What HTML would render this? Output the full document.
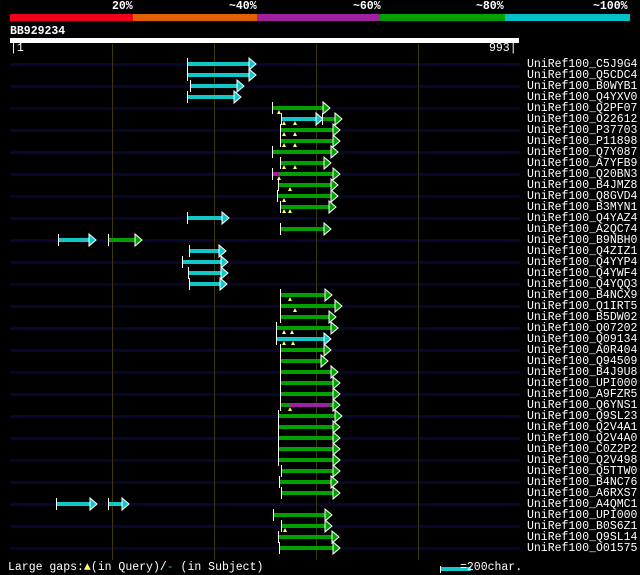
<!DOCTYPE html>
<html><head><meta charset="utf-8"><style>
html,body{margin:0;padding:0;background:#000;width:640px;height:575px;overflow:hidden;position:relative}
.t{position:absolute;color:#fff;font-family:"Liberation Mono","DejaVu Sans Mono",monospace;font-size:11.5px;line-height:11px;white-space:pre}
#labels div{position:absolute;left:527px;color:#fff;font-family:"Liberation Mono",monospace;font-size:11.5px;line-height:11px;white-space:pre}
svg{position:absolute;left:0;top:0}
</style></head><body>
<svg id="s" width="640" height="575"></svg>
<div class="t" style="left:112px;top:1px;font-weight:bold">20%</div>
<div class="t" style="left:229px;top:1px;font-weight:bold">~40%</div>
<div class="t" style="left:353px;top:1px;font-weight:bold">~60%</div>
<div class="t" style="left:476px;top:1px;font-weight:bold">~80%</div>
<div class="t" style="left:593px;top:1px;font-weight:bold">~100%</div>
<div class="t" style="left:10px;top:26px;font-weight:bold">BB929234</div>
<div class="t" style="left:10px;top:43px">|1</div>
<div class="t" style="left:489px;top:43px">993|</div>
<div class="t" style="left:8px;top:562px">Large gaps:<span style="color:#ff6">&#9650;</span>(in Query)/<span style="color:#0cc">-</span> (in Subject)</div>
<div class="t" style="left:460px;top:562px">=200char.</div>
<div id="labels">
<div style="top:59px">UniRef100_C5J9G4</div><div style="top:70px">UniRef100_Q5CDC4</div><div style="top:81px">UniRef100_B0WYB1</div><div style="top:92px">UniRef100_Q4YXV0</div><div style="top:103px">UniRef100_Q2PF07</div><div style="top:114px">UniRef100_O22612</div><div style="top:125px">UniRef100_P37703</div><div style="top:136px">UniRef100_P11898</div><div style="top:147px">UniRef100_Q7Y087</div><div style="top:158px">UniRef100_A7YFB9</div><div style="top:169px">UniRef100_Q20BN3</div><div style="top:180px">UniRef100_B4JMZ8</div><div style="top:191px">UniRef100_Q8GVD4</div><div style="top:202px">UniRef100_B3MYN1</div><div style="top:213px">UniRef100_Q4YAZ4</div><div style="top:224px">UniRef100_A2QC74</div><div style="top:235px">UniRef100_B9NBH0</div><div style="top:246px">UniRef100_Q4ZIZ1</div><div style="top:257px">UniRef100_Q4YYP4</div><div style="top:268px">UniRef100_Q4YWF4</div><div style="top:279px">UniRef100_Q4YQQ3</div><div style="top:290px">UniRef100_B4NCX9</div><div style="top:301px">UniRef100_Q1IRT5</div><div style="top:312px">UniRef100_B5DW02</div><div style="top:323px">UniRef100_Q07202</div><div style="top:334px">UniRef100_Q09134</div><div style="top:345px">UniRef100_A0R404</div><div style="top:356px">UniRef100_Q94509</div><div style="top:367px">UniRef100_B4J9U8</div><div style="top:378px">UniRef100_UPI000..</div><div style="top:389px">UniRef100_A9FZR5</div><div style="top:400px">UniRef100_Q6YNS1</div><div style="top:411px">UniRef100_Q9SL23</div><div style="top:422px">UniRef100_Q2V4A1</div><div style="top:433px">UniRef100_Q2V4A0</div><div style="top:444px">UniRef100_C0Z2P2</div><div style="top:455px">UniRef100_Q2V498</div><div style="top:466px">UniRef100_Q5TTW0</div><div style="top:477px">UniRef100_B4NC76</div><div style="top:488px">UniRef100_A6RXS7</div><div style="top:499px">UniRef100_A4QMC1</div><div style="top:510px">UniRef100_UPI000..</div><div style="top:521px">UniRef100_B0S6Z1</div><div style="top:532px">UniRef100_Q9SL14</div><div style="top:543px">UniRef100_O01575</div>
</div>
<script>
var s=document.getElementById('s'),h='';
function r(x,y,w,ht,c){h+='<rect x="'+x+'" y="'+y+'" width="'+w+'" height="'+ht+'" fill="'+c+'"/>';}
r(10,14,123,7,'#f00018');r(133,14,124,7,'#e06000');r(257,14,123,7,'#a020a0');r(380,14,125,7,'#00a000');r(505,14,125,7,'#00c0c8');
r(10,38,509,5,'#fff');
for(var i=0;i<45;i+=2)r(10,63+11*i,510,3,'#06062e');
[112,214,316,418].forEach(function(x){r(x,44,1,516,'#3a3a00');});
var C='#10c8c8',G='#00a000',M='#a020a0';
var rows=[[[187,255,C]],[[187,255,C]],[[190,243,C]],[[187,240,C]],[[272,329,G]],[[281,322,C],[322,341,G]],[[280,339,G]],[[280,339,G]],[[272,337,G]],[[280,330,G]],[[272,339,G,1]],[[278,337,G]],[[277,337,G]],[[280,335,G]],[[187,228,C]],[[280,330,G]],[[58,95,C],[108,141,G]],[[189,225,C]],[[182,227,C]],[[188,227,C]],[[189,226,C]],[[280,331,G]],[[280,341,G]],[[280,335,G]],[[276,337,G]],[[276,330,C]],[[280,330,G]],[[280,327,G]],[[280,337,G]],[[280,339,G]],[[280,339,G]],[[280,339,G,2]],[[278,341,G]],[[278,339,G]],[[278,339,G]],[[278,339,G]],[[278,339,G]],[[281,339,G]],[[279,337,G]],[[281,339,G]],[[56,96,C],[108,128,C]],[[273,331,G]],[[281,331,G]],[[278,338,G]],[[279,339,G]]];
var gaps={4:[279],5:[284,295],6:[284,295],7:[284,295],9:[284,295],10:[279],11:[290],12:[284],13:[284,290],21:[290],22:[295],24:[284,292],25:[284,293],31:[290],42:[285]};
rows.forEach(function(a,i){var y=64+11*i;a.forEach(function(b){
 var x1=b[0],x2=b[1]-6;
 if(b[3]==1){r(x1,y-2,7,4,M);x1+=7;}
 r(x1,y-2,x2-x1,4,b[2]);
 if(b[3]==2)r(290,y-2,40,4,M);
 r(b[0],y-6,1,12,'#fff');
 h+='<polygon points="'+x2+','+(y-6)+' '+(x2+7)+','+y+' '+x2+','+(y+6)+'" fill="'+b[2]+'" stroke="#fff" stroke-width="1"/>';
});
(gaps[i]||[]).forEach(function(g){h+='<polygon points="'+g+','+(y+2)+' '+(g+2)+','+(y+6)+' '+(g-2)+','+(y+6)+'" fill="#ff6"/>';});
});
r(440,566,1,7,'#fff');r(441,567,30,4,C);
s.innerHTML=h;
</script>
</body></html>
